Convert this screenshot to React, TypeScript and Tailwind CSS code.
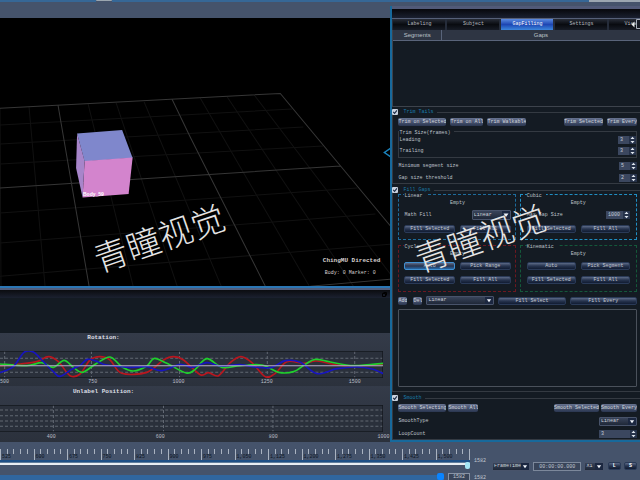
import { ReactNode } from "react";

type Point = [number, number];

interface ChildrenProps {
  children: ReactNode;
}

const tabs = ["Labeling", "Subject", "GapFilling", "Settings", "View"];

const red: Point[] = [
  [0, 257], [60, 252], [110, 245], [145, 230], [175, 245], [210, 287], [240, 282],
  [270, 240], [300, 230], [330, 240], [365, 280], [440, 277], [490, 240], [520, 230],
  [550, 240], [600, 284], [625, 278], [655, 287], [690, 248], [722, 230], [755, 248],
  [795, 290], [825, 280], [860, 245], [910, 250], [950, 243], [1010, 255], [1070, 258],
  [1149, 252],
];

const green: Point[] = [
  [0, 252], [80, 257], [125, 248], [160, 262], [192, 241], [220, 262], [247, 277],
  [290, 250], [330, 231], [365, 260], [400, 273], [440, 258], [462, 235], [500, 250],
  [558, 279], [585, 268], [620, 236], [665, 262], [720, 257], [785, 255], [835, 277],
  [880, 275], [915, 253], [945, 238], [990, 246], [1060, 257], [1149, 250],
];

const blue: Point[] = [
  [0, 278], [40, 260], [72, 217], [100, 216], [130, 245], [160, 275], [180, 289],
  [215, 268], [240, 256], [262, 238], [290, 244], [320, 255], [390, 262], [440, 260],
  [485, 272], [540, 253], [575, 262], [620, 248], [660, 258], [720, 254], [770, 262],
  [815, 262], [855, 242], [900, 247], [950, 281], [1010, 266], [1070, 261], [1115, 267],
  [1149, 281],
];

function smoothPath(points: Point[]) {
  let d = `M${points[0][0]} ${points[0][1]}`;
  for (let i = 0; i < points.length - 1; i++) {
    const p0 = points[i - 1] ?? points[i];
    const p1 = points[i];
    const p2 = points[i + 1];
    const p3 = points[i + 2] ?? p2;
    d += `C${p1[0] + (p2[0] - p0[0]) / 6} ${p1[1] + (p2[1] - p0[1]) / 6} ${
      p2[0] - (p3[0] - p1[0]) / 6
    } ${p2[1] - (p3[1] - p1[1]) / 6} ${p2[0]} ${p2[1]}`;
  }
  return d;
}

function Watermark() {
  return (
    <p className="-rotate-[19deg] whitespace-nowrap font-['Noto_Sans_CJK_SC','Noto_Sans',sans-serif] text-[34px] font-light leading-none text-[#e4e4e4]">
      青瞳视觉
    </p>
  );
}

function Button({ children, className = "" }: { children: ReactNode; className?: string }) {
  return (
    <button
      className={`h-[8px] overflow-hidden whitespace-nowrap rounded-[2px] border border-[#2a3a57] bg-linear-to-b from-[#5d6b88] via-[#27344e] to-[#111c33] text-center leading-[6px] text-[#c3c8d0] ${className}`}>
      {children}
    </button>
  );
}

function SmallButton({ children }: ChildrenProps) {
  return (
    <button className="h-[8px] overflow-hidden whitespace-nowrap rounded-[2px] bg-linear-to-b from-[#66728f] to-[#2a3650] leading-[8px] text-[#d0d4da]">
      {children}
    </button>
  );
}

function Group({ title, children, className = "" }: { title: string; children: ReactNode; className?: string }) {
  return (
    <fieldset className={`min-w-0 border border-r-0 border-[#343a42] pl-[5px] pr-[3px] ${className}`}>
      <legend className="-ml-[6px] h-[6px] pr-1">
        <label className="flex h-[6px] items-center gap-[5px] text-[#1a7ba8]">
          <span className="grid size-[6px]">
            <input
              type="checkbox"
              defaultChecked
              className="peer col-start-1 row-start-1 size-[6px] appearance-none rounded-[1px] bg-[#c9d2df]"
            />
            <svg
              viewBox="0 0 6 6"
              className="pointer-events-none invisible col-start-1 row-start-1 size-[6px] peer-checked:visible">
              <path d="M1.2 2.800 2.600 4.400 4.900 1.300" fill="none" stroke="#1c2b45" strokeWidth="1.100" />
            </svg>
          </span>
          {title}
        </label>
      </legend>
      {children}
    </fieldset>
  );
}

function Box({ title, children, className = "" }: { title: string; children: ReactNode; className?: string }) {
  return (
    <fieldset className={`min-w-0 border ${className}`}>
      <legend className="h-[10px] pr-1 pt-1 leading-[6px]">{title}</legend>
      {children}
    </fieldset>
  );
}

function Spin({ label, value, className = "" }: { label: string; value: string; className?: string }) {
  return (
    <span className={`flex h-[8px] items-center bg-[#3b475f] ${className}`}>
      <input
        aria-label={label}
        defaultValue={value}
        className="h-full w-0 min-w-0 flex-1 pl-[2px] text-[#c5ccd8] outline-none"
      />
      <svg viewBox="0 0 7 8" className="h-[8px] w-[7px] bg-[#26324a]">
        <path d="M1.500 3 3.500 .8 5.500 3zM1.500 5 3.500 7.200 5.500 5z" fill="#dfe5ee" />
      </svg>
    </span>
  );
}

function Select({ label, value, className = "" }: { label: string; value: string; className?: string }) {
  return (
    <span
      className={`flex items-stretch overflow-hidden rounded-[1px] border border-[#48536a] bg-linear-to-b from-[#39445a] to-[#1f2838] ${className}`}>
      <select
        aria-label={label}
        className="w-0 min-w-0 flex-1 appearance-none pl-[1px] leading-none text-[#ced3da] outline-none">
        <option>{value}</option>
      </select>
      <svg viewBox="0 0 8 8" className="w-[8px] shrink-0 bg-[#1b2740]">
        <path d="M1.500 2.500h5L4 6z" fill="#eef2f8" />
      </svg>
    </span>
  );
}

function SpinRow({ label, value, className = "" }: { label: string; value: string; className?: string }) {
  return (
    <div className={`flex h-[8px] items-center justify-between ${className}`}>
      <span>{label}</span>
      <Spin label={label} value={value} className="w-[18px]" />
    </div>
  );
}

function Scene() {
  return (
    <div className="relative min-h-[268px] flex-1 overflow-hidden bg-black">
      <svg
        viewBox="0 18 390 268"
        preserveAspectRatio="xMidYMid slice"
        className="absolute inset-0 size-full">
        <g stroke="#111111" strokeWidth="1">
          <path d="M0 125 292 109M0 144 303 127M0 164 323 146M0 213 357 188M0 243 375 214M0 276 390 244" />
          <path d="M29 107 45 286M88 104 133 286M116 103 177 286M144 102 221 286M200 98 309 286M227 97 353 286M254 95 390 274M0 108 1 286" />
        </g>
        <path
          d="M0 108.300 280 93.500 390 226M58 105.500 89 286M172 99.500 190 137 265 286M0 188 340 166M310 286 390 279"
          fill="none"
          stroke="#363636"
        />
        <path d="M77 133.500 122 130 132.500 158 84.500 161.500z" fill="#7f87cc" />
        <path d="M84.500 161 132.500 157.500 128.500 194 82.500 197.500z" fill="#d384cd" />
        <path d="M77 133.500 84.500 161 82.500 197.500 76 168z" fill="#a785ca" />
        <path d="M390.500 148 384 152.500 390.500 157" fill="none" stroke="#1a83bd" strokeWidth="1.500" />
      </svg>
      <span className="absolute left-[83px] top-[174px] font-['Liberation_Sans',sans-serif] text-[5px] font-bold text-white">
        Body_59
      </span>
      <div className="absolute left-[91px] top-[202px]">
        <Watermark />
      </div>
      <div className="absolute bottom-[10px] right-[10px] text-[#d6d0d0]">
        <p className="mb-[7px] text-[6px] font-bold">ChingMU Directed</p>
        <p className="pl-[2px]">Body: 0 Marker: 0</p>
      </div>
    </div>
  );
}

function Plot({ curves = false }: { curves?: boolean }) {
  const columns = curves ? [14, 274, 538, 801, 1063] : [160, 490, 818];
  const rows = curves ? [235, 277] : [228, 245, 261, 277];
  return (
    <svg viewBox="0 213 1149 81" preserveAspectRatio="none" className="block h-[27px] w-full bg-[#2a303b]">
      <g stroke="#626873" strokeWidth="3" strokeDasharray="9 6">
        {rows.map((y) => (
          <path key={y} d={`M0 ${y}H1149`} />
        ))}
        {columns.map((x) => (
          <path key={x} d={`M${x} 213V294`} />
        ))}
      </g>
      <path d="M0 214H1147V293H0" fill="none" stroke="#14181f" strokeWidth="3" />
      {curves && (
        <g fill="none" strokeWidth="5">
          <path d={smoothPath(red)} stroke="#b9161e" />
          <path d={smoothPath(green)} stroke="#1fd02c" />
          <path d={smoothPath(blue)} stroke="#1714c0" />
          <path d="M0 257H1149" stroke="#b9aecb" strokeWidth="3" />
        </g>
      )}
    </svg>
  );
}

function Plots() {
  return (
    <section>
      <div className="h-[4px] border-t-2 border-[#2b76b4] bg-[#505d7c]" />
      <div className="flex h-[8px] items-center justify-end bg-linear-to-b from-[#0b0c10] to-[#1b2130] pr-[3px]">
        <svg viewBox="0 0 5 5" className="size-[5px]">
          <path d="M1.500 .5h3v3M.5 1.500h3v3h-3z" fill="none" stroke="#000" />
        </svg>
      </div>
      <div className="h-[35px] bg-[#141b23]" />
      <div className="bg-linear-to-b from-[#343b49] to-[#2b313c] pr-[7px] text-[#b9bec7]">
        <h2 className="h-[18px] w-[54%] pt-[2px] text-center text-[6px] font-bold text-[#dcdfe4]">
          Rotation:
        </h2>
        <Plot curves />
        <div className="flex h-[8px] items-center">
          <span className="w-[23%]">500</span>
          <span className="w-[22%]">750</span>
          <span className="w-[23%]">1000</span>
          <span className="w-[23%]">1250</span>
          <span>1500</span>
        </div>
      </div>
      <div className="bg-linear-to-b from-[#343b49] to-[#2b313c] pr-[7px] text-[#b9bec7]">
        <h2 className="h-[19px] w-[54%] pt-[3px] text-center text-[6px] font-bold text-[#dcdfe4]">
          Unlabel Position:
        </h2>
        <Plot />
        <div className="-mr-[7px] flex h-[10px] items-center pr-[1px]">
          <span className="w-[12%]" />
          <span className="w-[28%]">400</span>
          <span className="w-[29%]">600</span>
          <span className="flex-1">800</span>
          <span>1000</span>
        </div>
      </div>
    </section>
  );
}

function GapPanel() {
  return (
    <aside className="flex w-[39%] shrink-0 flex-col border-b-2 border-l-2 border-[#17699c] bg-[#141b23] text-[#bdc2c9]">
      <div className="h-[12px] border-t-[3px] border-[#515a78] bg-linear-to-b from-[#07080c] to-[#1a2030]" />
      <nav className="relative flex h-[12px] gap-[2px] overflow-hidden border-t border-[#566078] bg-[#252c3a] pl-[1px]">
        {tabs.map((tab) => (
          <button
            key={tab}
            className={`w-[52px] shrink-0 leading-none ${
              tab === "GapFilling"
                ? "bg-linear-to-b from-[#5d8be0] via-[#1e46b4] to-[#3d86dc] text-white"
                : "bg-linear-to-b from-[#282d38] via-[#090b10] to-[#171c26] text-[#b4b8bf]"
            } ${tab === "View" ? "pl-[15px] text-left" : ""}`}>
            {tab}
          </button>
        ))}
        <svg viewBox="0 0 10 11" className="absolute right-0 top-0 h-[11px] w-[10px]">
          <path d="M6.500 .5h4v9h-4z" fill="#171c26" stroke="#a8afba" />
          <path d="M1.500 5.500 4.500 2.500v6z" fill="#e6e9ee" />
        </svg>
      </nav>
      <div className="min-h-[77px] flex-1 border-b border-l border-[#3d434c]">
        <table className="w-full table-fixed border-collapse font-['Liberation_Sans',sans-serif] text-[6px]">
          <thead>
            <tr className="h-[10px] border-b border-[#59647a] bg-[#2e3543]">
              <th className="w-[48px] border-r border-[#59647a] p-0 font-normal">Segments</th>
              <th className="p-0 font-normal">Gaps</th>
            </tr>
          </thead>
        </table>
      </div>

      <Group title="Trim Tails" className="mt-[2px] pb-[1px]">
        <div className="mt-[3px] flex gap-1">
          <SmallButton>Trim on Selected</SmallButton>
          <SmallButton>Trim on All</SmallButton>
          <SmallButton>Trim Walkable</SmallButton>
          <span className="flex-1" />
          <SmallButton>Trim Selected</SmallButton>
          <SmallButton>Trim Every</SmallButton>
        </div>
        <Box title="Trim Size(frames)" className="border-[#343a42] pb-[2px]">
          <SpinRow label="Leading" value="3" />
          <SpinRow label="Trailing" value="3" className="mt-[3px]" />
        </Box>
        <SpinRow label="Minimum segment size" value="5" className="mt-[4px]" />
        <SpinRow label="Gap size threshold" value="2" className="mt-[4px]" />
      </Group>

      <Group title="Fill Gaps" className="mt-[3px] pb-[4px]">
        <div className="-mt-[4px] grid grid-cols-2 gap-x-1">
          <Box title="Linear" className="border-dashed border-[#1d6c9c] pb-[6px] pl-[5px] pr-[4px]">
            <p className="text-center leading-[8px]">Empty</p>
            <div className="mt-[3px] flex h-[10px] items-center justify-between">
              <span>Math Fill</span>
              <Select label="Math Fill" value="Linear" className="h-[10px] w-[39px]" />
            </div>
            <div className="mt-[5px] grid grid-cols-2 gap-[5px]">
              <Button>Fill Selected</Button>
              <Button>Fill All</Button>
            </div>
          </Box>
          <Box title="Cubic" className="border-dashed border-[#208fc4] pb-[6px] pl-[6px] pr-[6px]">
            <p className="text-center leading-[8px]">Empty</p>
            <div className="mt-[3px] flex h-[10px] items-center justify-between">
              <span>Max Gap Size</span>
              <Spin label="Max Gap Size" value="1000" className="w-[24px]" />
            </div>
            <div className="mt-[5px] grid grid-cols-2 gap-[5px]">
              <Button>Fill Selected</Button>
              <Button>Fill All</Button>
            </div>
          </Box>
          <Box title="Cycle" className="border-dashed border-[#6c1820] pb-[7px] pl-[5px] pr-[4px]">
            <p className="text-center leading-[8px]">Empty</p>
            <div className="mt-[4px] grid grid-cols-2 gap-x-[5px] gap-y-[6px]">
              <Button className="border-[#3f8fd0] to-[#2469a8]">Auto</Button>
              <Button>Pick Range</Button>
              <Button>Fill Selected</Button>
              <Button>Fill All</Button>
            </div>
          </Box>
          <Box title="Kinematic" className="border-dashed border-[#14583a] pb-[7px] pl-[6px] pr-[6px]">
            <p className="text-center leading-[8px]">Empty</p>
            <div className="mt-[4px] grid grid-cols-2 gap-x-[5px] gap-y-[6px]">
              <Button>Auto</Button>
              <Button>Pick Segment</Button>
              <Button>Fill Selected</Button>
              <Button>Fill All</Button>
            </div>
          </Box>
        </div>
        <div className="mt-1 flex h-[9px] items-center gap-1">
          <SmallButton>Add</SmallButton>
          <span className="ml-[2px] flex">
            <SmallButton>Del</SmallButton>
          </span>
          <Select label="Fill method" value="Linear" className="h-[9px] w-[68px]" />
          <Button className="flex-1">Fill Select</Button>
          <Button className="flex-1">Fill Every</Button>
        </div>
        <div className="mt-1 h-[78px] rounded-[1px] border border-[#4a515b]" />
      </Group>

      <Group title="Smooth" className="mt-[3px] pb-[1px]">
        <div className="mt-[3px] flex gap-[2px]">
          <SmallButton>Smooth Selecting</SmallButton>
          <SmallButton>Smooth All</SmallButton>
          <span className="flex-1" />
          <SmallButton>Smooth Selected</SmallButton>
          <SmallButton>Smooth Every</SmallButton>
        </div>
        <div className="mt-[5px] flex h-[9px] items-center justify-between">
          <span>SmoothType</span>
          <Select label="SmoothType" value="Linear" className="h-[9px] w-[38px]" />
        </div>
        <div className="mt-1 flex h-[8px] items-center justify-between">
          <span>LoopCount</span>
          <Spin label="LoopCount" value="3" className="w-[38px]" />
        </div>
      </Group>
    </aside>
  );
}

function Timeline() {
  return (
    <footer className="flex h-[38px] overflow-hidden bg-[#45536b] text-[#c2c8d2]">
      <div className="flex-1">
        <div className="mt-[7px] flex h-[11px] border-r border-[#a9b2c0]">
          {Array.from({ length: 14 }, (_, i) => (
            <div key={i} className="flex-1 border-l border-[#a9b2c0]">
              <div className="flex h-[5px] justify-evenly">
                <span className="w-px bg-[#a9b2c0]" />
                <span className="w-px bg-[#a9b2c0]" />
                <span className="w-px bg-[#a9b2c0]" />
                <span className="w-px bg-[#a9b2c0]" />
              </div>
              <span className="block pl-[1px] leading-[6px] text-[#0e1624]">
                {(525 + i * 75).toLocaleString("en-US")}
              </span>
            </div>
          ))}
        </div>
        <input
          type="range"
          aria-label="Current frame"
          defaultValue={100}
          className="block h-[8px] w-full appearance-none border-t-2 border-[#1d4f86] bg-[linear-gradient(#5f7d9c_1px,#e8edf2_1px,#e8edf2_3px,transparent_3px)] [&::-webkit-slider-thumb]:h-[7px] [&::-webkit-slider-thumb]:w-[5px] [&::-webkit-slider-thumb]:appearance-none [&::-webkit-slider-thumb]:rounded-[2px] [&::-webkit-slider-thumb]:bg-[#a5e6f5]"
        />
        <div className="mt-[5px] flex h-[7px] items-center">
          <input
            type="range"
            aria-label="Frame range"
            defaultValue={100}
            className="h-[7px] min-w-0 flex-1 appearance-none bg-[linear-gradient(transparent_2px,#30669f_2px,#30669f_7px)] [&::-webkit-slider-thumb]:h-[7px] [&::-webkit-slider-thumb]:w-[7px] [&::-webkit-slider-thumb]:appearance-none [&::-webkit-slider-thumb]:rounded-[2px] [&::-webkit-slider-thumb]:bg-[#0a84ff]"
          />
          <input
            aria-label="End frame"
            defaultValue="1582"
            className="ml-1 h-[8px] w-[22px] border border-[#8893a5] bg-[#39455a] text-center outline-none"
          />
        </div>
      </div>
      <div className="flex w-[170px] shrink-0 gap-[3px] pl-1 pr-[3px]">
        <div className="flex flex-col pt-[17px]">
          <span>1582</span>
          <span className="mt-[12px]">1582</span>
        </div>
        <div className="mt-[20px] flex h-[9px] flex-1 items-stretch justify-between pl-[3px]">
          <Select label="Time mode" value="FrameTime" className="w-[38px] border-[#3a465c]" />
          <input
            aria-label="Time"
            defaultValue="00:00:00.000"
            className="w-[48px] border border-[#7c889b] bg-[#39455a] text-center outline-none"
          />
          <Select label="Speed" value="X1" className="w-[20px] border-[#3a465c]" />
          <Button className="w-[13px] font-bold text-white">L</Button>
          <Button className="w-[13px] font-bold text-white">S</Button>
        </div>
      </div>
    </footer>
  );
}

export default function App() {
  return (
    <div className="relative flex min-h-screen flex-col overflow-hidden bg-[#45536b] font-['Liberation_Mono',monospace] text-[5px] leading-none">
      <header className="flex h-[6px] items-start">
        <div className="h-[2px] w-[15%] bg-[#366796]" />
        <div className="h-[1px] w-[16px] rounded-b-[1px] bg-[#9ba6b0]" />
        <div className="h-[2px] flex-1 bg-[#366796]" />
        <div className="h-[2px] w-[8%] bg-[#9ba6b0]" />
      </header>
      <div className="flex flex-1">
        <main className="flex min-w-0 flex-1 flex-col">
          <div className="h-[12px]" />
          <Scene />
          <Plots />
        </main>
        <GapPanel />
      </div>
      <Timeline />
      <div className="pointer-events-none absolute right-[92px] top-[220px]">
        <Watermark />
      </div>
    </div>
  );
}
